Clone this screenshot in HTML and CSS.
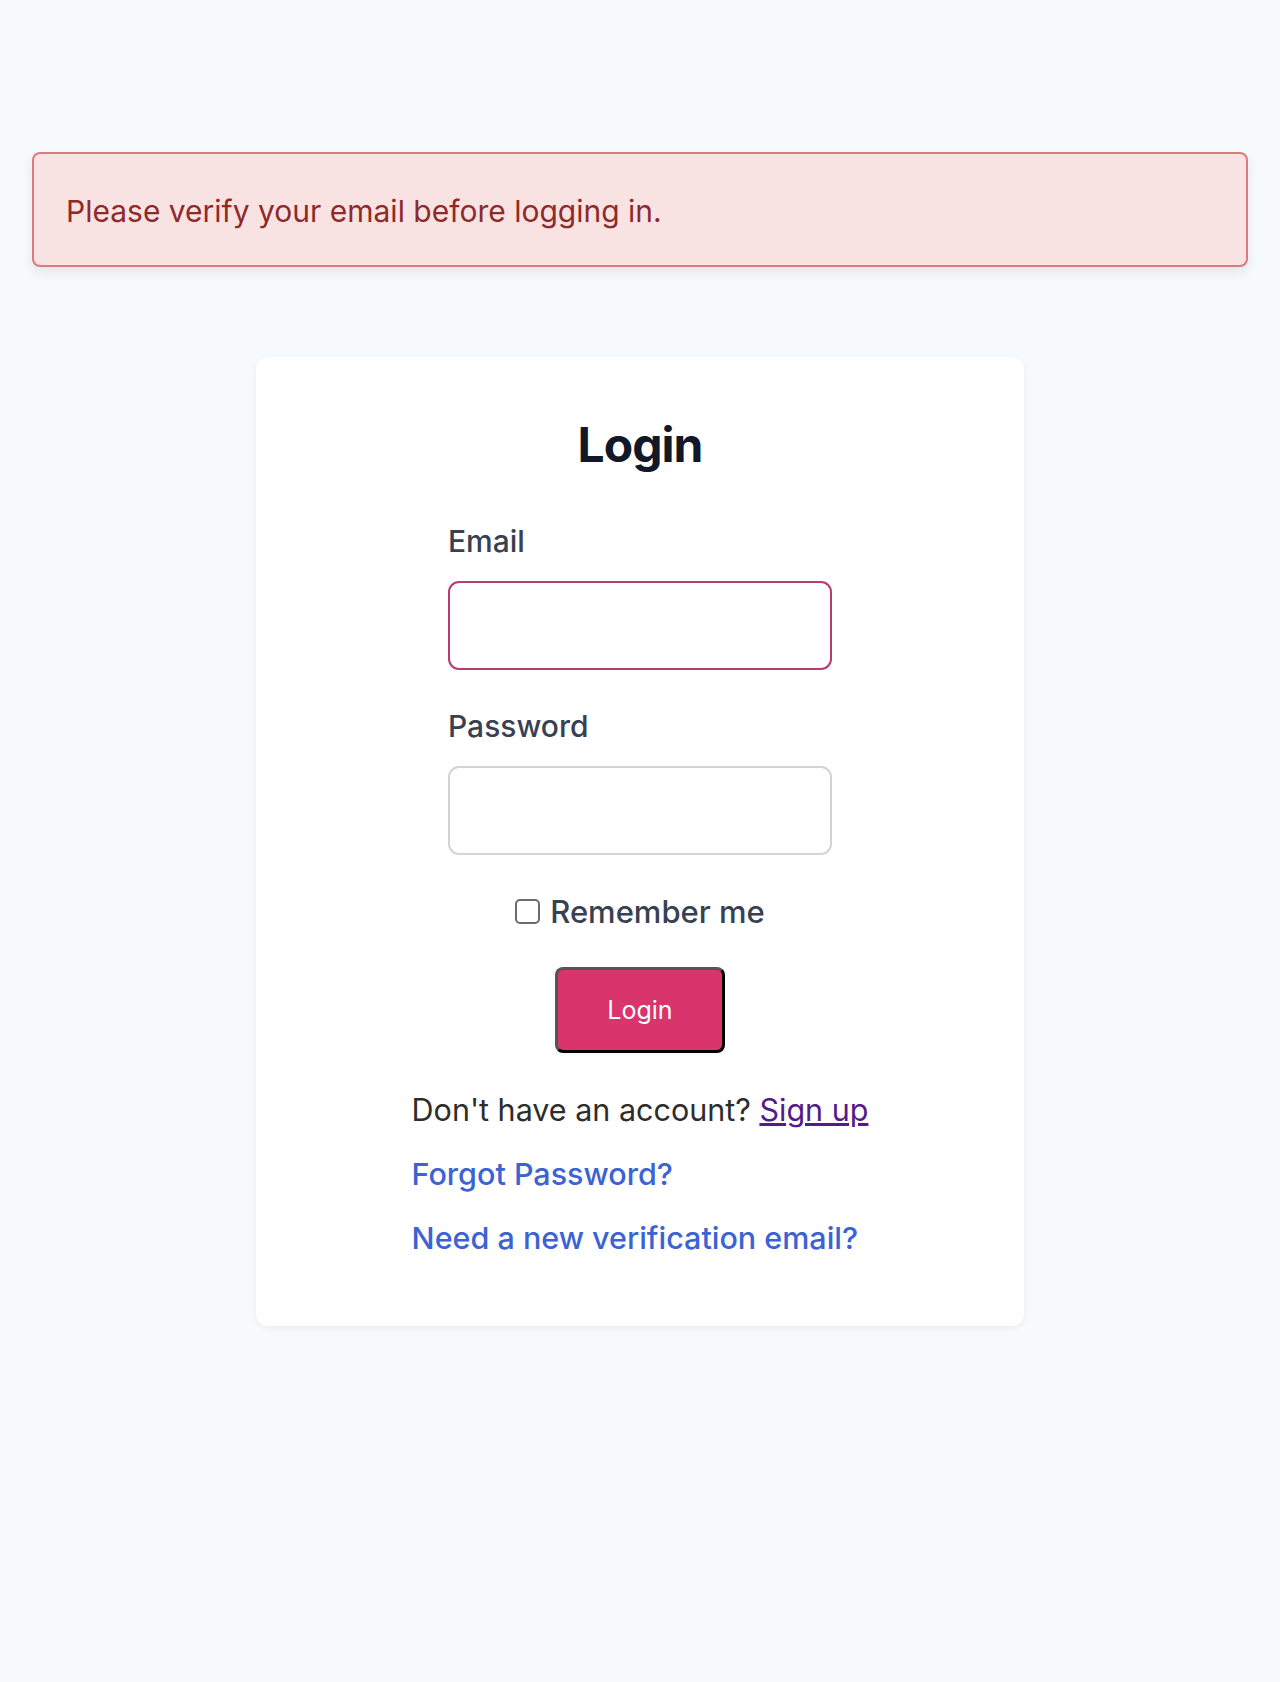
FILE: index.html
```html
<!DOCTYPE html>
<html lang="en">
<head>
    <meta charset="UTF-8">
    <meta name="viewport" content="width=device-width, initial-scale=1.0">
    <title>Login</title>
    <link rel="stylesheet" href="styles.css">
</head>
<body>
    <div class="page">
        <div class="alert">Please verify your email before logging in.</div>

        <div class="card">
            <h1>Login</h1>
            <form class="login-form">
                <div class="field">
                    <label for="email">Email</label>
                    <input type="email" id="email" class="input input-error">
                </div>
                <div class="field">
                    <label for="password">Password</label>
                    <input type="password" id="password" class="input">
                </div>
                <div class="remember">
                    <input type="checkbox" id="remember">
                    <label for="remember">Remember me</label>
                </div>
                <div class="actions">
                    <button type="button" class="btn">Login</button>
                </div>
            </form>
            <div class="links">
                <p>Don't have an account? <a href="#" class="signup">Sign up</a></p>
                <p><a href="#" class="link">Forgot Password?</a></p>
                <p><a href="#" class="link">Need a new verification email?</a></p>
            </div>
        </div>
    </div>
</body>
</html>
```

FILE: styles.css
```css
body {
    margin: 0;
    padding: 0;
    font-family: 'Inter', 'Noto Sans', sans-serif;
    background: #f7fafc;
    color: #374151;
    min-height: 100vh;
}
.page {
    padding: 152px 32px 60px;
}
.alert {
    background: #f9e2e2;
    border: 2px solid #db7b7b;
    border-radius: 8px;
    color: #8e2a2a;
    font-size: 30px;
    line-height: 40px;
    padding: 37px 32px 34px;
    box-shadow: 0 6px 12px rgba(0, 0, 0, 0.08);
}
.card {
    width: 768px;
    box-sizing: border-box;
    margin: 90px auto 0;
    background: #fff;
    border-radius: 12px;
    box-shadow: 0 2px 6px rgba(0, 0, 0, 0.06);
    padding: 58px 0 66px;
}
.card h1 {
    margin: 0 0 44px;
    text-align: center;
    font-size: 48px;
    line-height: 60px;
    letter-spacing: -1px;
    font-weight: 700;
    color: #111827;
}
.login-form {
    width: 384px;
    margin: 0 auto;
}
.field {
    margin-bottom: 34px;
}
.field label {
    display: block;
    font-size: 30px;
    line-height: 45px;
    font-weight: 500;
    color: #374151;
    margin-bottom: 17px;
}
.input {
    display: block;
    width: 100%;
    height: 89px;
    box-sizing: border-box;
    border: 2px solid #d4d4d8;
    border-radius: 11px;
    background: #fff;
    font-size: 27px;
    padding: 0 16px;
    outline: none;
}
.input-error {
    border-color: #b83c6c;
}
.remember {
    display: flex;
    align-items: center;
    justify-content: center;
    gap: 10px;
    margin-top: 32px;
    font-size: 31px;
    line-height: 45px;
    font-weight: 500;
    color: #374151;
}
.remember input {
    appearance: none;
    width: 25px;
    height: 25px;
    margin: 0;
    border: 2px solid #6b6b6b;
    border-radius: 5px;
    background: #fff;
}
.actions {
    text-align: center;
    margin-top: 33px;
}
.btn {
    background: #d9346b;
    color: #fff;
    font-family: inherit;
    font-size: 25px;
    line-height: 36px;
    padding: 22px 49px;
    border: 3px solid;
    border-color: #555 #000 #000 #555;
    border-radius: 8px;
    cursor: pointer;
}
.links {
    width: fit-content;
    margin: 34px auto 0;
}
.links p {
    margin: 0 0 19px;
    font-size: 30.5px;
    line-height: 45px;
    color: #2d2d2d;
}
.links p:last-child {
    margin-bottom: 0;
}
.signup {
    color: #551a8b;
}
.link {
    color: #3b63d4;
    text-decoration: none;
    font-weight: 500;
}
```
